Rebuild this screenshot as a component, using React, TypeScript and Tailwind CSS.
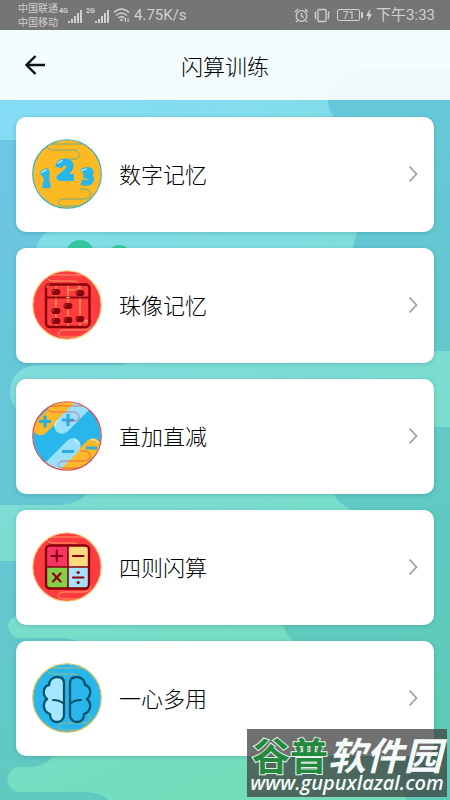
import type { ReactNode } from "react";

type Training = {
  id: string;
  title: string;
  line: string;
  fill: string;
  art: ReactNode;
};

function Backdrop() {
  return (
    <svg
      aria-hidden="true"
      className="absolute inset-0 h-full w-full"
      viewBox="0 0 450 800"
      preserveAspectRatio="none"
    >
      <defs>
        <linearGradient id="light" gradientUnits="userSpaceOnUse" x1="0" y1="80" x2="300" y2="800">
          <stop offset="0" stopColor="#84dcf8" />
          <stop offset="0.35" stopColor="#7fdddd" />
          <stop offset="0.7" stopColor="#78ddc9" />
          <stop offset="1" stopColor="#72ddb8" />
        </linearGradient>
        <linearGradient id="darkLeft" x1="0" y1="0" x2="0" y2="1">
          <stop offset="0" stopColor="#6cc7e4" />
          <stop offset="1" stopColor="#64c7d2" />
        </linearGradient>
        <linearGradient id="darkLow" x1="0" y1="0" x2="0.3" y2="1">
          <stop offset="0" stopColor="#64c7d2" />
          <stop offset="1" stopColor="#5fcabf" />
        </linearGradient>
        <linearGradient id="darkRight" gradientUnits="userSpaceOnUse" x1="340" y1="70" x2="450" y2="700">
          <stop offset="0" stopColor="#66c7dd" />
          <stop offset="0.5" stopColor="#62c9c9" />
          <stop offset="1" stopColor="#5dcbb8" />
        </linearGradient>
      </defs>
      <rect width="450" height="800" fill="url(#light)" />
      <path
        d="M450 68H362a34 34 0 0 0-34 34q2 24 40 30v88q-12 8-15 28l20 103H450Z"
        fill="url(#darkRight)"
      />
      <path
        d="M450 427H350q-22 26-16 67 5 12 22 17h10q-20 60-84 112 4 12 14 20l70 60 40 97h44Z"
        fill="url(#darkRight)"
      />
      <path
        d="M0 140H120v88H60q-22 4-24 22v90H140q-2 25-22 25H36q-26 4-26 28 2 20 20 25h60v70q-8 17-32 17H0Z"
        fill="url(#darkLeft)"
      />
      <path
        d="M0 561H60v54H20q-12 3-12 12 2 10 12 11H64q12 1 16 6v100H58q-4 21-26 23H20a12 12 0 0 0 0 25H84q20 1 24 8H0Z"
        fill="url(#darkLow)"
      />
      <circle cx="80" cy="254" r="14" fill="#35c79d" />
      <circle cx="119" cy="257" r="12" fill="#35c79d" />
    </svg>
  );
}

function NumbersArt() {
  return (
    <g fill="none" strokeLinejoin="round">
      <g stroke="#29b6ea" strokeWidth="5.600">
        <path d="M9 35.500l5.500-3V49" strokeWidth="6" />
        <path d="M10.500 46.500h8" />
        <path d="M26.500 28.500q1-5.500 6.500-5.500 5.500 0 5 5-1 4-10 10.500h14" strokeWidth="7" />
        <path d="M50 33q3-2.500 6.500-2 4 1 1 5l-3.500 1q6 0 5 4-2 4.500-9.500 2" />
      </g>
      <path
        d="M9.500 33.500l4.500-2.500M26 24l4-2.500M50 31.500l4-1.500"
        stroke="#d9f5ff"
        strokeWidth="1.300"
        strokeLinecap="round"
      />
    </g>
  );
}

const BEADS = [
  [24, 22],
  [48, 23],
  [36, 36],
  [24, 41],
  [24, 51],
  [36, 50],
  [48, 49],
];

function AbacusArt() {
  return (
    <g>
      <path d="M24 16v40M36 16v40M48 16v40" stroke="#f8b54b" strokeWidth="1.200" />
      <rect x="14" y="14.500" width="43.500" height="42.500" rx="3.500" fill="none" stroke="#8c0009" strokeWidth="2.400" />
      <path d="M14 27.500h43" stroke="#8c0009" strokeWidth="1.800" />
      <path d="M34 27.500h4" stroke="#f8b54b" strokeWidth="1" />
      {BEADS.map(([x, y]) => (
        <g key={`${x}-${y}`}>
          <ellipse cx={x} cy={y} rx="4.400" ry="3.300" fill="#86000a" />
          <path d={`M${x - 3} ${y + 1}q-1-3 2-3`} fill="none" stroke="#e77878" strokeWidth="0.500" />
        </g>
      ))}
      <path d="M51 52h4M14.500 18q0-3 3-3.500" fill="none" stroke="#fbc875" strokeWidth="0.700" />
    </g>
  );
}

function PlusMinusArt() {
  return (
    <g>
      <g strokeLinecap="round">
        <path d="M8.500 26.500L45-10" stroke="#fbb829" strokeWidth="15.500" />
        <path d="M30 25L65-10" stroke="#98e0fb" strokeWidth="15.500" />
        <path d="M61 45L26 80" stroke="#fbb829" strokeWidth="15.500" />
        <path d="M41 45L6 80" stroke="#98e0fb" strokeWidth="15.500" />
      </g>
      <path
        d="M7 20.500h12M13 14.500v12M30 19h12M36 13v12M30 50.500h12M54 47h11"
        stroke="#29aee2"
        strokeWidth="3.200"
      />
      <path
        d="M23 25q0-4 3-6M42 38.500q4 1 5 4M60 38.500q4 0 6 3"
        fill="none"
        stroke="#e9faff"
        strokeWidth="1"
        strokeLinecap="round"
      />
    </g>
  );
}

function OperatorsArt() {
  return (
    <g>
      <path d="M14 35V17q0-4 4-4h18v22Z" fill="#f73563" />
      <path d="M36 13h17q4 0 4 4v18H36Z" fill="#fbd97e" />
      <path d="M14 35h22v21H18q-4 0-4-4Z" fill="#83cf48" />
      <path d="M36 35h21v17q0 4-4 4H36Z" fill="#a6e1fb" />
      <rect x="14" y="13.500" width="43" height="43" rx="4" fill="none" stroke="#86000a" strokeWidth="2.400" />
      <path d="M36 13v43M14 35h43" stroke="#86000a" strokeWidth="1.600" />
      <path
        d="M19.500 24h10.500M24.800 18.700v10.600M41 24h10.500M21 41.500l7.500 8M28.500 41.500l-7.500 8M41 45.500h10.500"
        stroke="#8f0010"
        strokeWidth="2.200"
        strokeLinecap="round"
      />
      <circle cx="46.200" cy="40.500" r="1.600" fill="#8f0010" />
      <circle cx="46.200" cy="50.500" r="1.600" fill="#8f0010" />
    </g>
  );
}

function BrainArt() {
  return (
    <g stroke="#05536f" strokeWidth="2.300" strokeLinecap="round" strokeLinejoin="round">
      <path
        d="M32 20c0-4-3-6-7-6-5 0-8 4-8 8-6 1-7 10-2 14-5 4-4 13 3 15 0 5 3 8 7 8s7-3 7-7Z"
        fill="#a6e7fd"
      />
      <path
        d="M38 20c0-4 3-6 7-6 5 0 8 4 8 8 6 1 7 10 2 14 5 4 4 13-3 15 0 5-3 8-7 8s-7-3-7-7Z"
        fill="#29b6ea"
      />
      <path d="M21 37q7 0 11 4M49 37q-7 0-11 4" fill="none" strokeWidth="2" />
    </g>
  );
}

const TRAININGS: Training[] = [
  { id: "numbers", title: "数字记忆", line: "#36a9b8", fill: "#fbb924", art: <NumbersArt /> },
  { id: "beads", title: "珠像记忆", line: "#fbc875", fill: "#ff3d40", art: <AbacusArt /> },
  { id: "plus-minus", title: "直加直减", line: "#e0484f", fill: "#29b6ea", art: <PlusMinusArt /> },
  { id: "four-ops", title: "四则闪算", line: "#fbc875", fill: "#ff3d40", art: <OperatorsArt /> },
  { id: "multitask", title: "一心多用", line: "#d5be55", fill: "#29b6ea", art: <BrainArt /> },
];

function TrainingIcon({ id, line, fill, art }: Training) {
  // the stripes of this one sit under the wavy line, every other drawing sits over it
  const artBelow = id === "plus-minus";

  return (
    <svg aria-hidden="true" className="size-[70px] shrink-0" viewBox="0 0 70 70">
      <clipPath id={`clip-${id}`}>
        <circle cx="35" cy="35" r="34" />
      </clipPath>
      <circle cx="35" cy="35" r="34" fill={fill} />
      <g clipPath={`url(#clip-${id})`}>
        {artBelow ? art : null}
        <path
          d="M54 5H18q-5 2-1 5 2 1 5 1H42q5 1 5 5t-5 4H35M48 50h5c7 1 7 9 0 10H31c-6 1-6 6-1 7h21"
          fill="none"
          stroke={line}
          strokeWidth="0.700"
        />
        {artBelow ? null : art}
      </g>
      <circle cx="35" cy="35" r="34.300" fill="none" stroke={line} strokeWidth="1.100" />
    </svg>
  );
}

function Signal({ label }: { label: string }) {
  return (
    <span className="flex items-start">
      <span className="w-[9px] font-['Roboto',sans-serif] text-[7px] leading-[10px] font-bold">{label}</span>
      <svg aria-hidden="true" className="mt-1 h-3.5 w-3.5" viewBox="0 0 14 14" fill="currentColor">
        <path d="M0 11h2v2H0zM3 9h2v4H3zM6 6h2v7H6zM9 3h2v10H9zM12 0h2v13h-2z" />
      </svg>
    </span>
  );
}

function StatusBar() {
  return (
    <div className="flex h-[30px] items-center justify-between bg-[#757575] pr-[15px] pl-[18px] text-[#d0d0d0]">
      <div className="flex items-center">
        <div className="mr-px text-[10px] leading-[14px]">
          <div>中国联通</div>
          <div>中国移动</div>
        </div>
        <div className="flex gap-1">
          <Signal label="4G" />
          <Signal label="2G" />
        </div>
        <svg
          aria-hidden="true"
          className="mx-1 h-4 w-[17px]"
          viewBox="0 0 17 16"
          fill="none"
          stroke="currentColor"
          strokeWidth="1.500"
        >
          <path d="M1 5.500q7.500-7 15 0M3 8.500q5.500-5 11 0M5.500 11q3-2.500 6 0" />
          <circle cx="8.500" cy="13" r="1.300" fill="currentColor" stroke="none" />
          <path d="M12.500 15v-4l-1 1.500M15 11v4l1-1.500" strokeWidth="1" />
        </svg>
        <span className="font-['Roboto',sans-serif] text-[15px] leading-5">4.75K/s</span>
      </div>
      <div className="flex items-center">
        <svg
          aria-hidden="true"
          className="mr-1 size-[15px]"
          viewBox="0 0 15 15"
          fill="none"
          stroke="currentColor"
          strokeWidth="1.300"
        >
          <circle cx="7.500" cy="8" r="5.300" />
          <path d="M7.500 5v3.200l2.500 1.500M1 4l3-3M14 4l-3-3M3.500 12.500L2 14M11.500 12.500L13 14" />
        </svg>
        <svg
          aria-hidden="true"
          className="mr-1.5 h-[15px] w-[18px]"
          viewBox="0 0 18 15"
          fill="none"
          stroke="currentColor"
          strokeWidth="1.300"
        >
          <rect x="5" y="1.500" width="8" height="12" rx="1" />
          <path d="M3 3.500L2 5l1 1.500L2 8l1 1.500L2 11M15 3.500L16 5l-1 1.500L16 8l-1 1.500 1 1.500" />
        </svg>
        <span className="flex h-3 w-[23px] items-center justify-center rounded-[2px] border border-current font-['Roboto',sans-serif] text-[11px] leading-none">
          71
        </span>
        <span className="ml-px h-1.5 w-0.5 bg-current" />
        <svg aria-hidden="true" className="mr-1 ml-[3px] h-3 w-1.5" viewBox="0 0 6 12" fill="currentColor">
          <path d="M4 0L0 7h2.500L2 12l4-7H3.500Z" />
        </svg>
        <span className="font-['Roboto','Noto_Sans_CJK_SC',sans-serif] text-[15px] leading-5">下午3:33</span>
      </div>
    </div>
  );
}

function Header() {
  return (
    <header className="grid h-[70px] grid-cols-[1fr_auto_1fr] items-center bg-white/90 px-4">
      <button type="button" aria-label="返回" className="flex size-[38px] items-center justify-center">
        <svg className="size-5" viewBox="0 0 20 20" fill="none" stroke="#07151c" strokeWidth="2.400">
          <path d="M10.500 1L1.500 10l9 9M1.500 10H20" />
        </svg>
      </button>
      <h1 className="text-[22px] leading-8 font-light text-black">闪算训练</h1>
    </header>
  );
}

function TrainingCard({ item }: { item: Training }) {
  return (
    <li>
      <button
        type="button"
        className="flex h-[115px] w-full items-center rounded-[10px] bg-white px-4 pb-0.5 text-left shadow-[0_1px_4px_rgba(20,90,100,0.25)]"
      >
        <TrainingIcon {...item} />
        <span className="ml-[17px] flex-1 pb-0.5 text-[22px] leading-8 font-light text-black">{item.title}</span>
        <svg
          aria-hidden="true"
          className="h-[18px] w-2.5"
          viewBox="0 0 10 18"
          fill="none"
          stroke="#a0a0a0"
          strokeWidth="1.800"
        >
          <path d="M1.500 1.500l7 7.500-7 7.500" />
        </svg>
      </button>
    </li>
  );
}

function SiteBadge() {
  return (
    <div className="absolute right-[3px] bottom-[3px] flex h-[68px] w-[200px] flex-col items-center bg-[#404040]/75 whitespace-nowrap">
      <div className="mt-1.5 text-[38px] leading-[38px] font-bold text-[#f4fbfa]">
        <span className="text-[#23893f] [-webkit-text-stroke:2px_#e4f3e8] [paint-order:stroke_fill]">谷普</span>
        <span className="italic">软件园</span>
      </div>
      <div className="font-['Open_Sans','Noto_Sans',sans-serif] text-[20px] leading-[20px] font-semibold text-[#f4fbfa] italic">
        www.gupuxlazal.com
      </div>
    </div>
  );
}

export default function App() {
  return (
    <div className="relative min-h-screen overflow-hidden font-['Noto_Sans_CJK_SC',sans-serif]">
      <Backdrop />
      <div className="relative">
        <StatusBar />
        <Header />
        <main className="px-4 pt-[17px] pb-11">
          <ul className="flex flex-col gap-4">
            {TRAININGS.map((item) => (
              <TrainingCard key={item.id} item={item} />
            ))}
          </ul>
        </main>
      </div>
      <SiteBadge />
    </div>
  );
}
